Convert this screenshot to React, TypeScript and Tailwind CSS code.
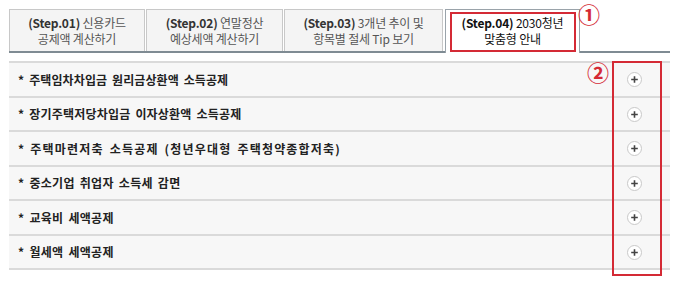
import React from "react";

const tabs = [
  { step: "(Step.01)", a: "신용카드", b: "공제액 계산하기", w: "w-[136px]" },
  { step: "(Step.02)", a: "연말정산", b: "예상세액 계산하기", w: "w-[137px]" },
  { step: "(Step.03)", a: "3개년 추이 및", b: "항목별 절세 Tip 보기", w: "w-[159px]" },
];

const rows = [
  { t: "주택임차차입금 원리금상환액 소득공제", h: "h-[33px]", s: "tracking-[0.1px]" },
  { t: "장기주택저당차입금 이자상환액 소득공제", h: "h-[32px]", s: "tracking-[0.2px]" },
  { t: "주택마련저축 소득공제 (청년우대형 주택청약종합저축)", h: "h-[33px]", s: "tracking-[1.2px]" },
  { t: "중소기업 취업자 소득세 감면", h: "h-[32px]", s: "tracking-[0.3px]" },
  { t: "교육비 세액공제", h: "h-[33px]", s: "tracking-[0.3px]" },
  { t: "월세액 세액공제", h: "h-[32px]", s: "tracking-[0.3px]" },
];

function PlusIcon() {
  return (
    <div className="w-[15px] h-[15px] rounded-full border border-[#c9c9c9] bg-white flex items-center justify-center">
      <svg width="9" height="9" viewBox="0 0 9 9">
        <path d="M4.5 1.2V7.8M1.2 4.5H7.8" stroke="#444" strokeWidth="1.6" />
      </svg>
    </div>
  );
}

export default function App() {
  return (
    <div
      className="relative w-[680px] h-[281px] bg-white overflow-hidden"
      style={{ fontFamily: '"Noto Sans CJK KR", "Noto Sans", sans-serif' }}
    >
      <div className="pt-[9px] pl-[9px] w-[670px]">
        <div className="flex items-end border-b-2 border-[#7f8b93] h-[44px]">
          {tabs.map((tb, i) => (
            <div
              key={i}
              className={`${tb.w} h-[42px] mr-[1px] bg-[#f4f4f4] border border-b-0 border-[#c8c8c8] flex flex-col items-center justify-center text-[12px] leading-[16px] text-[#555] tracking-[-0.2px]`}
            >
              <div>
                <span className="font-bold text-[#333]">{tb.step}</span> {tb.a}
              </div>
              <div>{tb.b}</div>
            </div>
          ))}
          <div className="ml-[1px] w-[135px] h-[44px] -mb-[2px] bg-white border border-b-0 border-[#9aa3aa] flex flex-col items-center justify-center text-[12px] leading-[16px] text-[#111] tracking-[-0.2px] pb-[2px]">
            <div>
              <span className="font-bold">(Step.04)</span> 2030청년
            </div>
            <div>맞춤형 안내</div>
          </div>
        </div>

        <div className="mt-[8px] flex flex-col">
          {rows.map((r, i) => (
            <div
              key={i}
              className={`${r.h} box-content bg-[#f7f7f7] border-t-2 border-[#dadada] ${i === rows.length - 1 ? "border-b-2" : ""} flex items-center justify-between pl-[9px] pr-[28px]`}
            >
              <div className={`text-[12px] font-bold text-[#222] ${r.s} [word-spacing:2px]`}>
                <span className="mr-[5px]">*</span>
                {r.t}
              </div>
              <PlusIcon />
            </div>
          ))}
        </div>
      </div>

      {/* annotations */}
      <div className="absolute left-[450px] top-[12px] w-[126px] h-[40px] border-2 border-[#d42a35]" />
      <div className="absolute left-[578px] top-0 text-[#d42a35] text-[22px] leading-[26px] font-bold">①</div>
      <div className="absolute left-[612px] top-[61px] w-[50px] h-[215px] border-2 border-[#d42a35]" />
      <div className="absolute left-[587px] top-[58px] text-[#d42a35] text-[22px] leading-[26px] font-bold">②</div>
    </div>
  );
}
